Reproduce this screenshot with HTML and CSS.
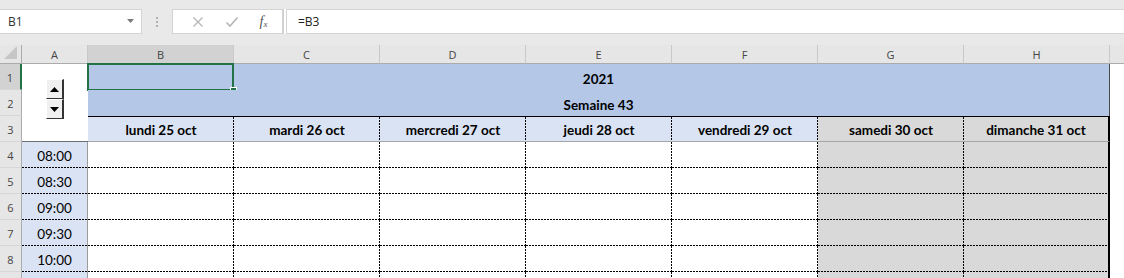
FILE: index.html
```html
<!DOCTYPE html>
<html lang="fr">
<head>
    <meta charset="UTF-8">
    <title>Planning semaine 43</title>
    <link rel="stylesheet" href="styles.css">
</head>
<body>
    <!-- Formula bar -->
    <div class="formula-bar">
        <div class="name-box">
            <span>B1</span>
            <svg class="dropdown" width="8" height="5" viewBox="0 0 8 5"><path d="M0 0h7L3.5 4z" fill="#7a7a7a"/></svg>
        </div>
        <div class="grip"><i></i><i></i><i></i></div>
        <div class="fx-buttons">
            <svg width="12" height="12" viewBox="0 0 12 12"><path d="M1.5 1.5l9 9M10.5 1.5l-9 9" stroke="#b5b5b5" stroke-width="1.3"/></svg>
            <svg width="14" height="12" viewBox="0 0 14 12"><path d="M1.5 6.5l3.5 3.5 7.5-8.5" stroke="#b5b5b5" stroke-width="1.6" fill="none"/></svg>
            <span class="fx">f<sub>x</sub></span>
        </div>
        <div class="formula-input">=B3</div>
    </div>

    <!-- Sheet -->
    <div class="sheet">
        <div class="corner"><svg width="13" height="13" viewBox="0 0 13 13"><path d="M13 0v13H0z" fill="#c6c6c6"/></svg></div>
        <div class="col-head">A</div>
        <div class="col-head selected">B</div>
        <div class="col-head">C</div>
        <div class="col-head">D</div>
        <div class="col-head">E</div>
        <div class="col-head">F</div>
        <div class="col-head">G</div>
        <div class="col-head">H</div>
        <div class="col-head last"></div>

        <!-- row 1 -->
        <div class="row-head selected">1</div>
        <div class="spin-cell">
            <div class="spinner">
                <div class="spin-btn"><svg width="9" height="5" viewBox="0 0 9 5"><path d="M4.5 0L9 5H0z" fill="#000"/></svg></div>
                <div class="spin-btn"><svg width="9" height="5" viewBox="0 0 9 5"><path d="M0 0h9L4.5 5z" fill="#000"/></svg></div>
            </div>
        </div>
        <div class="title-cell">
            2021
            <div class="selection"><span class="handle"></span></div>
        </div>
        <div class="blank"></div>

        <!-- row 2 -->
        <div class="row-head">2</div>
        <div class="title-cell">Semaine 43</div>
        <div class="blank"></div>

        <!-- row 3 -->
        <div class="row-head">3</div>
        <div class="day">lundi 25 oct</div>
        <div class="day">mardi 26 oct</div>
        <div class="day">mercredi 27 oct</div>
        <div class="day">jeudi 28 oct</div>
        <div class="day">vendredi 29 oct</div>
        <div class="day weekend">samedi 30 oct</div>
        <div class="day weekend end">dimanche 31 oct</div>
        <div class="blank"></div>

        <!-- rows 4 to 8 -->
        <div class="row-head">4</div>
        <div class="time">08:00</div>
        <div class="slot"></div><div class="slot"></div><div class="slot"></div><div class="slot"></div><div class="slot"></div>
        <div class="slot weekend"></div><div class="slot weekend end"></div>
        <div class="blank"></div>

        <div class="row-head">5</div>
        <div class="time">08:30</div>
        <div class="slot"></div><div class="slot"></div><div class="slot"></div><div class="slot"></div><div class="slot"></div>
        <div class="slot weekend"></div><div class="slot weekend end"></div>
        <div class="blank"></div>

        <div class="row-head">6</div>
        <div class="time">09:00</div>
        <div class="slot"></div><div class="slot"></div><div class="slot"></div><div class="slot"></div><div class="slot"></div>
        <div class="slot weekend"></div><div class="slot weekend end"></div>
        <div class="blank"></div>

        <div class="row-head">7</div>
        <div class="time">09:30</div>
        <div class="slot"></div><div class="slot"></div><div class="slot"></div><div class="slot"></div><div class="slot"></div>
        <div class="slot weekend"></div><div class="slot weekend end"></div>
        <div class="blank"></div>

        <div class="row-head">8</div>
        <div class="time">10:00</div>
        <div class="slot"></div><div class="slot"></div><div class="slot"></div><div class="slot"></div><div class="slot"></div>
        <div class="slot weekend"></div><div class="slot weekend end"></div>
        <div class="blank"></div>

        <!-- row 9, only its top edge shows -->
        <div class="row-head"></div>
        <div class="time"></div>
        <div class="slot"></div><div class="slot"></div><div class="slot"></div><div class="slot"></div><div class="slot"></div>
        <div class="slot weekend"></div><div class="slot weekend end"></div>
        <div class="blank"></div>
    </div>
</body>
</html>
```

FILE: styles.css
```css
/* Page */
body {
    margin: 0;
    height: 278px;
    overflow: hidden;
    background: #e6e6e6;
    font-family: 'Open Sans', 'Noto Sans', sans-serif;
}

* {
    box-sizing: border-box;
}

/* Excel "dotted" borders: 2px dash, 1px gap */
:root {
    --dash-right: linear-gradient(#000 2px, transparent 2px) right top / 1px 3px repeat-y;
    --dash-bottom: linear-gradient(to right, #000 2px, transparent 2px) left bottom / 3px 1px repeat-x;
}

/* Formula bar */
.formula-bar {
    display: flex;
    align-items: center;
    height: 45px;
    padding-top: 9px;
    padding-bottom: 11px;
    background: #e9e9e9;
}

.name-box {
    display: flex;
    align-items: center;
    justify-content: space-between;
    width: 142px;
    height: 25px;
    padding: 0 6px 0 8px;
    background: #fff;
    border: 1px solid #d4d4d4;
    border-left: none;
    font-size: 12px;
    color: #333;
}

.grip {
    display: flex;
    flex-direction: column;
    gap: 2px;
    width: 30px;
    align-items: center;
}

.grip i {
    display: block;
    width: 2px;
    height: 2px;
    background: #b0b0b0;
}

.fx-buttons {
    display: flex;
    align-items: center;
    justify-content: space-around;
    width: 111px;
    height: 25px;
    padding: 0 4px 0 8px;
    background: #fff;
    border: 1px solid #d4d4d4;
}

.fx {
    font-family: 'Liberation Serif', serif;
    font-style: italic;
    font-size: 14px;
    color: #555;
}

.fx sub {
    font-size: 9px;
    vertical-align: -1px;
}

.formula-input {
    flex: 1;
    height: 25px;
    margin-left: 3px;
    padding-left: 11px;
    line-height: 23px;
    background: #fff;
    border: 1px solid #d4d4d4;
    border-right: none;
    box-shadow: -2px 0 0 #fff, -3px 0 0 #cfcfcf;
    font-size: 12px;
    color: #222;
}

/* Sheet grid */
.sheet {
    display: grid;
    grid-template-columns: 22px 66px repeat(7, 146px) 1fr;
    grid-template-rows: 19px repeat(9, 26px);
    background: #fff;
    font-family: 'Lato', 'Liberation Sans', sans-serif;
    font-size: 13.5px;
    color: #000;
}

.corner {
    display: flex;
    align-items: flex-end;
    justify-content: flex-end;
    padding: 0 4px 4px 0;
    background: #e6e6e6;
    border-right: 1px solid #ababab;
    border-bottom: 1px solid #ababab;
}

.col-head {
    display: flex;
    align-items: center;
    justify-content: center;
    background: #e6e6e6;
    border-right: 1px solid #c9c9c9;
    border-bottom: 1px solid #ababab;
    font-family: 'Open Sans', 'Noto Sans', sans-serif;
    font-size: 11px;
    color: #444;
}

.col-head.selected {
    background: #d2d2d2;
    border-bottom: 1px solid #8f8f8f;
}

.col-head.last {
    border-right: none;
}

.row-head {
    display: flex;
    align-items: center;
    justify-content: center;
    padding-top: 2px;
    background: #e6e6e6;
    border-right: 1px solid #ababab;
    border-bottom: 1px solid #d6d6d6;
    font-family: 'Open Sans', 'Noto Sans', sans-serif;
    font-size: 11px;
    color: #444;
}

.row-head.selected {
    background: #d2d2d2;
    border-right: 2px solid #217346;
}

/* Spin button in A1:A3 */
.spin-cell {
    grid-row: span 3;
    display: flex;
    justify-content: center;
    padding-top: 15px;
    background: #fff;
    border-bottom: 1px solid #6f6f6f;
}

.spinner {
    display: flex;
    flex-direction: column;
    width: 18px;
    height: 40px;
}

.spin-btn {
    display: flex;
    align-items: center;
    justify-content: center;
    height: 20px;
    background: #f0f0f0;
    border-top: 1px solid #fff;
    border-left: 1px solid #fff;
    border-right: 2px solid #333;
    border-bottom: 1px solid #333;
}

/* Title rows */
.title-cell {
    grid-column: span 7;
    position: relative;
    display: flex;
    align-items: center;
    justify-content: center;
    padding-top: 3px;
    background: #b4c7e7;
    border-right: 1px solid #4a4a4a;
    font-weight: bold;
}

.selection {
    position: absolute;
    left: -1px;
    top: -1px;
    width: 147px;
    height: 28px;
    border: 2px solid #217346;
}

.handle {
    position: absolute;
    right: -5px;
    bottom: -5px;
    width: 7px;
    height: 7px;
    background: #217346;
    border: 1px solid #fff;
}

.blank {
    background: #fff;
}

/* Day headers */
.day {
    display: flex;
    align-items: center;
    justify-content: center;
    padding-top: 2px;
    background: var(--dash-right), #dae3f3;
    border-top: 1px solid #000;
    border-bottom: 1px solid #a6a6a6;
    font-weight: bold;
}

.day.weekend {
    background: var(--dash-right), #d9d9d9;
}

.day.weekend.end {
    background: #d9d9d9;
    border-right: 2px solid #000;
}

/* Time slots */
.time {
    display: flex;
    align-items: center;
    justify-content: center;
    padding-top: 2px;
    background: var(--dash-bottom), #dae3f3;
    border-right: 1px solid #9b9b9b;
}

.slot {
    background: var(--dash-right), var(--dash-bottom), #fff;
}

.slot.weekend {
    background: var(--dash-right), var(--dash-bottom), #d9d9d9;
}

.slot.weekend.end {
    background: var(--dash-bottom), #d9d9d9;
    border-right: 2px solid #000;
}
```
